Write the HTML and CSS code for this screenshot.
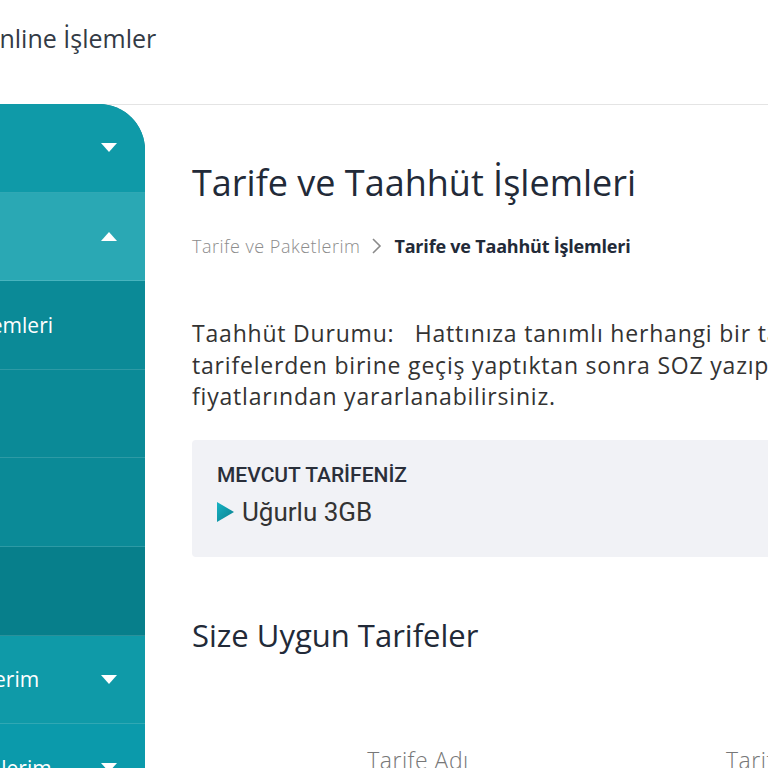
FILE: index.html
```html
<!DOCTYPE html>
<html lang="tr">

<head>
    <meta charset="UTF-8">
    <meta name="viewport" content="width=device-width, initial-scale=1.0">
    <title>Tarife ve Taahhüt İşlemleri</title>
    <link rel="stylesheet" href="styles.css">
</head>

<body class="body">
    <div class="page">
        <header class="topbar">
            <span class="brand">Online İşlemler</span>
        </header>
        <div class="layout">
            <nav class="sidebar">
                <div class="nav-item">
                    <span class="nav-label">Faturalarım</span>
                    <span class="caret down"></span>
                </div>
                <div class="nav-item open">
                    <span class="nav-label">Tarife ve Paketlerim</span>
                    <span class="caret up"></span>
                </div>
                <div class="nav-item sub">
                    <span class="nav-label">Tarife ve Taahhüt İşlemleri</span>
                </div>
                <div class="nav-item sub">
                    <span class="nav-label">Ek Paket İşlemleri</span>
                </div>
                <div class="nav-item sub">
                    <span class="nav-label">Paket Kullanımı</span>
                </div>
                <div class="nav-item sub last">
                    <span class="nav-label">Kampanyalar</span>
                </div>
                <div class="nav-item">
                    <span class="nav-label">Hesabım ve Hat Bilgilerim</span>
                    <span class="caret down"></span>
                </div>
                <div class="nav-item">
                    <span class="nav-label">Dijital Hizmet ve Ürünlerim</span>
                    <span class="caret down"></span>
                </div>
            </nav>

            <main class="main">
                <h1 class="title">Tarife ve Taahhüt İşlemleri</h1>
                <div class="breadcrumb">
                    <span class="crumb">Tarife ve Paketlerim</span>
                    <svg class="crumb-sep" width="14" height="20" viewBox="0 0 14 20">
                        <path d="M3 3 L10 10 L3 17" fill="none" stroke="#8a8a8a" stroke-width="1.6" />
                    </svg>
                    <span class="crumb current">Tarife ve Taahhüt İşlemleri</span>
                </div>

                <p class="status">
                    <span class="line">Taahhüt Durumu:&nbsp;&nbsp; Hattınıza tanımlı herhangi bir taahhüt bulunmamaktadır. Aşağıdaki</span>
                    <span class="line">tarifelerden birine geçiş yaptıktan sonra SOZ yazıp 5555'e göndererek taahhütlü tarife</span>
                    <span class="line">fiyatlarından yararlanabilirsiniz.</span>
                </p>

                <div class="current-box">
                    <div class="current-label">MEVCUT TARİFENİZ</div>
                    <div class="current-name">
                        <svg class="play" width="17" height="20" viewBox="0 0 17 20">
                            <defs>
                                <linearGradient id="tri" x1="0" y1="0" x2="1" y2="1">
                                    <stop offset="0" stop-color="#17b3c4" />
                                    <stop offset="1" stop-color="#0a7f8e" />
                                </linearGradient>
                            </defs>
                            <path d="M0 0 L17 10 L0 20 Z" fill="url(#tri)" />
                        </svg>
                        <span>Uğurlu 3GB</span>
                    </div>
                </div>

                <h2 class="subtitle">Size Uygun Tarifeler</h2>

                <div class="table-head">
                    <span class="col col-name">Tarife Adı</span>
                    <span class="col col-price">Tarife Ücreti</span>
                </div>
            </main>
        </div>
    </div>
</body>

</html>
```

FILE: styles.css
```css
.body {
    margin: 0;
    overflow: hidden;
    background: #fff;
    font-family: "Open Sans", Lato, sans-serif;
    color: #262b36;
}

.page {
    margin-left: -240px;
    width: 1400px;
}

.topbar {
    height: 104px;
    border-bottom: 1px solid #e4e4e4;
    padding-left: 220px;
}

.brand {
    display: block;
    padding-top: 22px;
    font-size: 25px;
    line-height: 32px;
    color: #333a45;
}

.layout {
    display: flex;
    align-items: flex-start;
    margin-top: -1px;
}

/* sidebar */

.sidebar {
    width: 385px;
    flex-shrink: 0;
    border-top-right-radius: 46px;
    overflow: hidden;
    background: #0a8592;
}

.nav-item {
    height: 87.6px;
    border-bottom: 1px solid rgba(255, 255, 255, 0.14);
    display: flex;
    align-items: center;
    justify-content: space-between;
    padding: 0 28px;
    background: #0f9aa8;
    color: #fff;
    font-size: 21px;
    white-space: nowrap;
}

.nav-item.open {
    background: #2aa8b4;
}

.nav-item.sub {
    background: #0b8a97;
    padding-left: 34px;
}

.nav-item.sub.last {
    background: #077f8b;
}

.nav-item:last-child {
    border-bottom: none;
    background: #0b9aab;
}

.caret {
    width: 0;
    height: 0;
    border-left: 8px solid transparent;
    border-right: 8px solid transparent;
}

.caret.down {
    border-top: 9px solid #fff;
}

.caret.up {
    border-bottom: 9px solid #fff;
}

/* content */

.main {
    padding: 59px 0 0 47px;
    width: 900px;
}

.title {
    margin: 0;
    font-size: 36px;
    font-weight: 400;
    line-height: 40px;
    color: #222a38;
}

.breadcrumb {
    display: flex;
    align-items: center;
    gap: 10px;
    margin-top: 31px;
    font-size: 18px;
    line-height: 24px;
}

.crumb {
    color: #8c8c8c;
    font-weight: 300;
    letter-spacing: 0.5px;
}

.crumb.current {
    color: #222a38;
    font-weight: 700;
    letter-spacing: -0.2px;
}

.status {
    margin: 60px 0 0;
    font-size: 23px;
    line-height: 31.5px;
    letter-spacing: 0.8px;
    color: #333;
}

.status .line {
    display: block;
    white-space: nowrap;
}

.current-box {
    margin-top: 27px;
    background: #f1f2f6;
    border-radius: 4px;
    height: 117px;
    box-sizing: border-box;
    padding: 22px 25px;
}

.current-label {
    font-family: Roboto, sans-serif;
    font-size: 21px;
    font-weight: 500;
    line-height: 26px;
    color: #2a2f3a;
}

.current-name {
    display: flex;
    align-items: center;
    gap: 8px;
    margin-top: 8px;
    font-family: Roboto, sans-serif;
    font-size: 26px;
    line-height: 32px;
    color: #333;
}

.subtitle {
    margin: 60px 0 0;
    font-size: 31px;
    font-weight: 400;
    line-height: 37px;
    color: #222a38;
}

.table-head {
    display: flex;
    margin-top: 92px;
    font-size: 23px;
    font-weight: 300;
    line-height: 28px;
    letter-spacing: 0.5px;
    color: #777;
}

.col-name {
    width: 452px;
    text-align: center;
}

.col-price {
    padding-left: 82px;
}
```
